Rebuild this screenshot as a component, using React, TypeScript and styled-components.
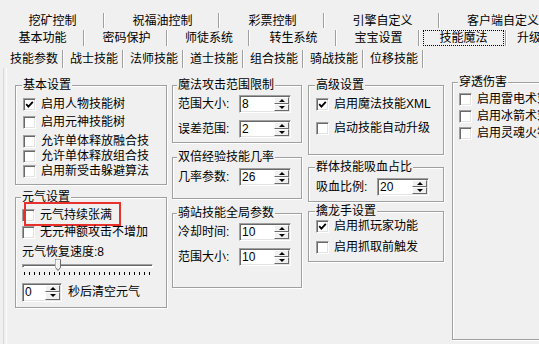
import React from 'react';
import styled, { createGlobalStyle } from 'styled-components';

const GlobalStyle = createGlobalStyle`
	html, body {
		margin: 0;
		padding: 0;
		background: #f0f0f0;
	}
	body {
		font-family: 'Liberation Sans', 'Noto Sans CJK SC', sans-serif;
		font-size: 12px;
		color: #000;
	}
`;

const Window = styled.div`
	position: relative;
	box-sizing: border-box;
	width: 539px;
	height: 344px;
	padding-top: 12px;
	overflow: hidden;
	background: #f0f0f0;
`;

const TabRow = styled.div< { $h: number; $pl?: number; $pt?: number } >`
	display: flex;
	height: ${ ( p ) => p.$h }px;
	padding-left: ${ ( p ) => p.$pl ?? 0 }px;
	padding-top: ${ ( p ) => p.$pt ?? 0 }px;
	box-sizing: border-box;
	white-space: nowrap;
`;

const Tab = styled.div< { $w: number; $sepTop: number; $sepH: number } >`
	position: relative;
	flex: 0 0 ${ ( p ) => p.$w }px;
	display: flex;
	align-items: center;
	justify-content: center;
	line-height: 14px;
	&::after {
		content: '';
		position: absolute;
		right: 1px;
		top: ${ ( p ) => p.$sepTop }px;
		height: ${ ( p ) => p.$sepH }px;
		width: 1px;
		background: #a0a0a0;
		box-shadow: 1px 0 0 #fff;
	}
`;

const FocusLabel = styled.span< { $focus?: boolean } >`
	display: inline-flex;
	align-items: center;
	justify-content: center;
	box-sizing: border-box;
	width: ${ ( p ) => ( p.$focus ? '81px' : 'auto' ) };
	height: 16px;
	border: 1px dotted ${ ( p ) => ( p.$focus ? '#000' : 'transparent' ) };
`;

const Page = styled.div`
	display: flex;
	align-items: flex-start;
	height: 276px;
	margin-left: 3px;
	padding: 10px 0 0 11px;
	box-sizing: border-box;
	border-left: 1px solid #d8d8d8;
	box-shadow: inset 2px 0 0 #f0f0f0, inset 3px 0 0 #fcfcfc;
`;

const Column = styled.div< { $w: number; $ml?: number; $mt?: number } >`
	flex: 0 0 ${ ( p ) => p.$w }px;
	display: flex;
	flex-direction: column;
	margin-left: ${ ( p ) => p.$ml ?? 0 }px;
	margin-top: ${ ( p ) => p.$mt ?? 0 }px;
`;

const Group = styled.fieldset< { $h: number; $pl: number; $mt?: number } >`
	position: relative;
	box-sizing: border-box;
	min-width: 0;
	height: ${ ( p ) => p.$h }px;
	margin: ${ ( p ) => p.$mt ?? 0 }px 0 0 0;
	padding: 0 4px 0 ${ ( p ) => p.$pl }px;
	border: 1px solid #a0a0a0;
	box-shadow: inset 1px 1px 0 #fff, 1px 1px 0 #fff;
`;

const Legend = styled.legend`
	height: 14px;
	margin-left: -1px;
	padding: 0 1px;
	line-height: 14px;
	white-space: nowrap;
	background: #f0f0f0;
`;

const CheckRow = styled.div< { $mt: number } >`
	position: relative;
	display: flex;
	align-items: center;
	gap: 5px;
	height: 14px;
	margin-top: ${ ( p ) => p.$mt }px;
	line-height: 14px;
	white-space: nowrap;
`;

const Box = styled.span`
	flex: 0 0 13px;
	box-sizing: border-box;
	width: 13px;
	height: 13px;
	display: flex;
	align-items: center;
	justify-content: center;
	background: #fff;
	border: 1px solid;
	border-color: #a0a0a0 #fff #fff #a0a0a0;
	box-shadow: inset 1px 1px 0 #696969, inset -1px -1px 0 #e3e3e3;
`;

const Highlight = styled.div`
	position: absolute;
	left: 2px;
	top: -6px;
	width: 97px;
	height: 24px;
	box-sizing: border-box;
	border: 2px solid #e8302c;
	pointer-events: none;
`;

const FieldRow = styled.div< { $mt: number } >`
	display: flex;
	align-items: center;
	height: 18px;
	margin-top: ${ ( p ) => p.$mt }px;
	white-space: nowrap;
`;

const FieldLabel = styled.span`
	flex: 0 0 61px;
	line-height: 14px;
`;

const SpinBox = styled.div< { $w: number; $h: number } >`
	display: flex;
	box-sizing: border-box;
	width: ${ ( p ) => p.$w }px;
	height: ${ ( p ) => p.$h }px;
	padding: 1px;
	background: #fff;
	border: 1px solid;
	border-color: #a0a0a0 #fff #fff #a0a0a0;
	box-shadow: inset 1px 1px 0 #696969, inset -1px -1px 0 #e3e3e3;
`;

const SpinValue = styled.span`
	flex: 1;
	padding-left: 1px;
	line-height: 14px;
	font-size: 12px;
`;

const SpinButtons = styled.div`
	flex: 0 0 15px;
	display: flex;
	flex-direction: column;
`;

const SpinBtn = styled.div< { $down?: boolean } >`
	flex: 1;
	display: flex;
	align-items: center;
	justify-content: center;
	box-sizing: border-box;
	background: #f0f0f0;
	border: 1px solid;
	border-color: #fff #696969 #696969 #fff;
	&::before {
		content: '';
		width: 0;
		height: 0;
		border-left: 3px solid transparent;
		border-right: 3px solid transparent;
		${ ( p ) =>
			p.$down ? 'border-top: 3px solid #000;' : 'border-bottom: 3px solid #000;' }
	}
`;

const Text = styled.div< { $mt: number } >`
	height: 14px;
	margin-top: ${ ( p ) => p.$mt }px;
	line-height: 14px;
	white-space: nowrap;
`;

const Slider = styled.div`
	position: relative;
	width: 131px;
	height: 18px;
`;

const Track = styled.div`
	position: absolute;
	left: 0;
	right: 0;
	top: 5px;
	height: 4px;
	box-sizing: border-box;
	background: #fff;
	border: 1px solid;
	border-color: #a0a0a0 #fff #fff #a0a0a0;
	box-shadow: inset 1px 1px 0 #696969;
`;

const Thumb = styled.svg`
	position: absolute;
	top: 0;
`;

const Ticks = styled.div`
	position: absolute;
	left: 2px;
	right: 0;
	top: 13px;
	height: 3px;
	background: repeating-linear-gradient(
		to right,
		#000 0 1px,
		transparent 1px 5px
	);
`;

const AfterText = styled.span`
	margin-left: 6px;
	line-height: 14px;
`;

const Check = ( { checked }: { checked?: boolean } ) => (
	<Box>
		{ checked && (
			<svg width="9" height="9" viewBox="0 0 9 9">
				<polyline
					points="1.2,4.2 3.4,6.6 7.8,1.8"
					fill="none"
					stroke="#000"
					strokeWidth="1.8"
				/>
			</svg>
		) }
	</Box>
);

const Spin = ( {
	value,
	w = 52,
	h = 18,
}: {
	value: string;
	w?: number;
	h?: number;
} ) => (
	<SpinBox $w={ w } $h={ h }>
		<SpinValue>{ value }</SpinValue>
		<SpinButtons>
			<SpinBtn />
			<SpinBtn $down />
		</SpinButtons>
	</SpinBox>
);

const topTabs: [ string, number ][] = [
	[ '挖矿控制', 105 ],
	[ '祝福油控制', 115 ],
	[ '彩票控制', 105 ],
	[ '引擎自定义', 115 ],
	[ '客户端自定义', 126 ],
];

const midTabs: [ string, number ][] = [
	[ '基本功能', 85 ],
	[ '密码保护', 83 ],
	[ '师徒系统', 82 ],
	[ '转生系统', 87 ],
	[ '宝宝设置', 83 ],
	[ '技能魔法', 87 ],
	[ '升级系统', 68 ],
];

const subTabs = [
	'技能参数',
	'战士技能',
	'法师技能',
	'道士技能',
	'组合技能',
	'骑战技能',
	'位移技能',
];

export default function App() {
	const speed = 8;
	const thumbLeft = ( speed / 30 ) * 131 - 2;

	return (
		<Window>
			<GlobalStyle />
			<TabRow $h={ 17 }>
				{ topTabs.map( ( [ label, w ] ) => (
					<Tab key={ label } $w={ w } $sepTop={ 1 } $sepH={ 15 }>
						{ label }
					</Tab>
				) ) }
			</TabRow>
			<TabRow $h={ 18 }>
				{ midTabs.map( ( [ label, w ] ) => (
					<Tab key={ label } $w={ w } $sepTop={ 1 } $sepH={ 16 }>
						<FocusLabel $focus={ label === '技能魔法' }>{ label }</FocusLabel>
					</Tab>
				) ) }
			</TabRow>
			<TabRow $h={ 21 } $pl={ 4 } $pt={ 2 }>
				{ subTabs.map( ( label ) => (
					<Tab key={ label } $w={ 60 } $sepTop={ 1 } $sepH={ 18 }>
						{ label }
					</Tab>
				) ) }
			</TabRow>

			<Page>
				<Column $w={ 152 }>
					<Group $h={ 107 } $pl={ 7 }>
						<Legend>基本设置</Legend>
						<CheckRow $mt={ 5 }>
							<Check checked />
							启用人物技能树
						</CheckRow>
						<CheckRow $mt={ 4 }>
							<Check />
							启用元神技能树
						</CheckRow>
						<CheckRow $mt={ 5 }>
							<Check />
							允许单体释放融合技
						</CheckRow>
						<CheckRow $mt={ 1 }>
							<Check />
							允许单体释放组合技
						</CheckRow>
						<CheckRow $mt={ 1 }>
							<Check />
							启用新受击躲避算法
						</CheckRow>
					</Group>
					<Group $h={ 118 } $pl={ 6 } $mt={ 5 }>
						<Legend>元气设置</Legend>
						<CheckRow $mt={ 4 }>
							<Check />
							元气持续张满
							<Highlight />
						</CheckRow>
						<CheckRow $mt={ 3 }>
							<Check />
							无元神额攻击不增加
						</CheckRow>
						<Text $mt={ 6 }>元气恢复速度:{ speed }</Text>
						<Slider>
							<Track />
							<Ticks />
							<Thumb
								width="6"
								height="12"
								viewBox="0 0 6 12"
								style={ { left: thumbLeft } }
							>
								<path d="M0.5 0.5 H5.5 V8.5 L3 11.5 L0.5 8.5 Z" fill="#f0f0f0" stroke="#696969" />
								<path d="M1 1 H5 M1 1 V8.5" stroke="#fff" fill="none" />
							</Thumb>
						</Slider>
						<FieldRow $mt={ 6 }>
							<Spin value="0" w={ 40 } h={ 19 } />
							<AfterText>秒后清空元气</AfterText>
						</FieldRow>
					</Group>
				</Column>

				<Column $w={ 130 } $ml={ 5 }>
					<Group $h={ 65 } $pl={ 5 }>
						<Legend>魔法攻击范围限制</Legend>
						<FieldRow $mt={ 3 }>
							<FieldLabel>范围大小:</FieldLabel>
							<Spin value="8" />
						</FieldRow>
						<FieldRow $mt={ 7 }>
							<FieldLabel>误差范围:</FieldLabel>
							<Spin value="2" />
						</FieldRow>
					</Group>
					<Group $h={ 49 } $pl={ 5 } $mt={ 7 }>
						<Legend>双倍经验技能几率</Legend>
						<FieldRow $mt={ 4 }>
							<FieldLabel>几率参数:</FieldLabel>
							<Spin value="26" />
						</FieldRow>
					</Group>
					<Group $h={ 82 } $pl={ 5 } $mt={ 7 }>
						<Legend>骑站技能全局参数</Legend>
						<FieldRow $mt={ 3 }>
							<FieldLabel>冷却时间:</FieldLabel>
							<Spin value="10" />
						</FieldRow>
						<FieldRow $mt={ 7 }>
							<FieldLabel>范围大小:</FieldLabel>
							<Spin value="10" />
						</FieldRow>
					</Group>
				</Column>

				<Column $w={ 136 } $ml={ 6 }>
					<Group $h={ 77 } $pl={ 7 }>
						<Legend>高级设置</Legend>
						<CheckRow $mt={ 5 }>
							<Check checked />
							启用魔法技能XML
						</CheckRow>
						<CheckRow $mt={ 10 }>
							<Check />
							启动技能自动升级
						</CheckRow>
					</Group>
					<Group $h={ 42 } $pl={ 7 } $mt={ 5 }>
						<Legend>群体技能吸血占比</Legend>
						<FieldRow $mt={ 4 }>
							<FieldLabel>吸血比例:</FieldLabel>
							<Spin value="20" />
						</FieldRow>
					</Group>
					<Group $h={ 58 } $pl={ 7 } $mt={ 2 }>
						<Legend>擒龙手设置</Legend>
						<CheckRow $mt={ 1 }>
							<Check checked />
							启用抓玩家功能
						</CheckRow>
						<CheckRow $mt={ 7 }>
							<Check />
							启用抓取前触发
						</CheckRow>
					</Group>
				</Column>

				<Column $w={ 130 } $ml={ 8 } $mt={ -3 }>
					<Group $h={ 265 } $pl={ 6 }>
						<Legend>穿透伤害</Legend>
						<CheckRow $mt={ 3 }>
							<Check />
							启用雷电术穿透
						</CheckRow>
						<CheckRow $mt={ 3 }>
							<Check />
							启用冰箭术穿透
						</CheckRow>
						<CheckRow $mt={ 3 }>
							<Check />
							启用灵魂火符穿透
						</CheckRow>
					</Group>
				</Column>
			</Page>
		</Window>
	);
}
